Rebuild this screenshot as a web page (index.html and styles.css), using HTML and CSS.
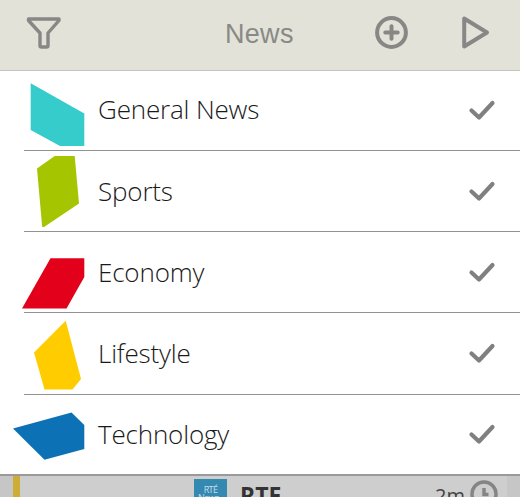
FILE: index.html
```
<!DOCTYPE html>
<html lang="en">
<head>
<meta charset="utf-8">
<title>News</title>
<link rel="stylesheet" href="styles.css">
</head>
<body>
<svg class="defs" width="0" height="0"><symbol id="check" viewBox="0 0 30 24"><path d="M4.500 12.500 12 19.500 25.500 5"/></symbol></svg>
<header class="bar">
  <svg class="icon filter" viewBox="0 0 40 40"><path d="M9.500 6h30.500v1.500L29 20v12.500q0 1.500-1.500 1.500h-5q-1.500 0-1.500-1.500V20L9.500 7.500z" transform="translate(-5 -1)"/></svg>
  <h1 class="title">News</h1>
  <svg class="icon add" viewBox="0 0 36 36"><circle cx="18.500" cy="18.500" r="14.400"/><path d="M18.500 12.300v12.400M12.300 18.500h12.400"/></svg>
  <svg class="icon play" viewBox="0 0 32 36"><path d="M5.200 4.500v28L28 18.500z"/></svg>
</header>
<ul class="list">
  <li class="row general"><svg class="shape" viewBox="0 71 98 80"><path fill="#35cccb" d="M30.700 83.300 84.300 113.500V146H60L30.700 130z"/></svg><span class="label">General News</span><svg class="check"><use href="#check"/></svg></li>
  <li class="row sports"><svg class="shape" viewBox="0 151 98 81"><path fill="#a5c500" d="M54.700 156h20L79 203.500 44 227h-1.800L37 168.500z"/></svg><span class="label">Sports</span><svg class="check"><use href="#check"/></svg></li>
  <li class="row economy"><svg class="shape" viewBox="0 232 98 81"><path fill="#e2001a" d="M50.500 258.200h33.800V277L66.500 308.600H22z"/></svg><span class="label">Economy</span><svg class="check"><use href="#check"/></svg></li>
  <li class="row lifestyle"><svg class="shape" viewBox="0 313 98 82"><path fill="#fc0" d="M65.700 320.700 81 379l-8.500 10.600h-28L34 352.500z"/></svg><span class="label">Lifestyle</span><svg class="check"><use href="#check"/></svg></li>
  <li class="row technology"><svg class="shape" viewBox="0 395 98 79"><path fill="#0c72b5" d="M13 428.500 71.500 412.500 84.300 425v24L44.500 459.700z"/></svg><span class="label">Technology</span><svg class="check"><use href="#check"/></svg></li>
</ul>
<section class="feed">
  <div class="stripe"></div>
  <div class="logo"><span>RTÉ</span><span class="sub">News</span></div>
  <strong class="source">RTE</strong>
  <span class="age">2m</span>
  <svg class="clock" viewBox="0 0 30 30"><circle cx="15" cy="15" r="12"/><path d="M15 9v6.500h4.500"/></svg>
  <div class="edge"></div>
</section>
</body>
</html>
```
FILE: styles.css
```
* { box-sizing: border-box; }
body {
  margin: 0;
  width: 520px;
  height: 497px;
  overflow: hidden;
  background: #fff;
  font-family: "Open Sans", sans-serif;
}
svg { display: block; flex: none; }
.defs { display: none; }
.bar {
  display: flex;
  height: 71px;
  padding: 14px 26px 0 24px;
  background: #e2e2d9;
  border-bottom: 1px solid #c5c5bf;
}
.icon {
  fill: none;
  stroke: #878785;
  stroke-width: 4;
  stroke-linecap: round;
  stroke-linejoin: round;
}
.filter { width: 40px; height: 40px; stroke-width: 3.4; }
.title {
  margin: 5px 0 0 161px;
  width: 148px;
  font: 400 27px/31px "Liberation Sans", sans-serif;
  letter-spacing: 0.3px;
  color: #898986;
}
.add { width: 36px; height: 36px; }
.play { width: 32px; height: 36px; margin-left: 50px; }
.list { margin: 0; padding: 0; list-style: none; }
.row {
  display: flex;
  height: 81px;
  padding-top: 22px;
  background: linear-gradient(#929292, #929292) right bottom / 496px 1px no-repeat;
}
.general { height: 80px; padding-top: 21px; }
.lifestyle { height: 82px; }
.technology { height: 79px; padding-top: 21px; background: none; }
.shape { width: 98px; height: 81px; margin-top: -22px; }
.general .shape { height: 80px; margin-top: -21px; }
.lifestyle .shape { height: 82px; }
.technology .shape { height: 79px; margin-top: -21px; }
.label {
  flex: 1;
  font-size: 26px;
  line-height: 36px;
  font-weight: 300;
  letter-spacing: -0.17px;
  color: #1a1a1a;
}
.general .label { margin-top: -1px; }
.check {
  width: 30px;
  height: 24px;
  margin: 6px 23px 0 0;
  fill: none;
  stroke: #808080;
  stroke-width: 4.200;
  stroke-linecap: round;
  stroke-linejoin: round;
}
.feed {
  display: flex;
  height: 23px;
  overflow: hidden;
  background: #cecece;
  border-top: 2px solid #9a9a9a;
}
.stripe { width: 20px; border-left: 13px solid #c6c6c6; background: #cdad36; }
.logo {
  width: 33px;
  height: 33px;
  margin: 3px 0 0 174px;
  padding-top: 6px;
  background: #3489b1;
  color: #c8dfe8;
  font-size: 9px;
  line-height: 10px;
  text-align: center;
}
.logo span { display: block; letter-spacing: -0.6px; }
.logo .sub { margin-top: -2px; text-align: left; padding-left: 4px; }
.source {
  width: 195px;
  margin: 4px 0 0 13px;
  font-size: 23px;
  line-height: 31px;
  color: #333;
}
.age { width: 34px; font-size: 20px; line-height: 26px; margin-top: 7px; color: #444; }
.clock {
  width: 30px;
  height: 30px;
  margin-top: 3px;
  fill: none;
  stroke: #858585;
  stroke-width: 3.500;
}
.edge { flex: 1; margin-left: 8px; background: #c6c6c6; }
```
